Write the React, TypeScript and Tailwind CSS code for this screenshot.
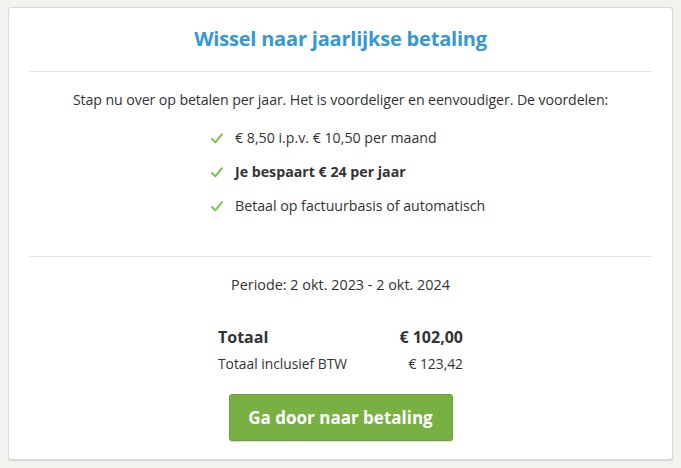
import React from 'react';

const benefits = [
  { text: '€ 8,50 i.p.v. € 10,50 per maand', bold: false },
  { text: 'Je bespaart € 24 per jaar', bold: true },
  { text: 'Betaal op factuurbasis of automatisch', bold: false },
];

function Check() {
  return (
    <svg width="12" height="11" viewBox="0 0 12 11" fill="none" className="shrink-0">
      <path d="M1 6 L4.3 9.3 L11 1.2" stroke="#7cc04b" strokeWidth="1.9" strokeLinecap="round" strokeLinejoin="round" />
    </svg>
  );
}

export default function App() {
  return (
    <div className="min-h-[468px] w-[681px] bg-[#f3f2ef] pt-[7px] pl-[8px]" style={{ fontFamily: '"Open Sans", Lato, sans-serif' }}>
      <div className="w-[665px] h-[453px] bg-white border border-[#d9d9d9] rounded-[3px] shadow-[0_1px_1px_rgba(0,0,0,0.12)] px-[20px] flex flex-col items-center">
        <h1 className="mt-[18px] text-[20px] font-bold text-[#3597d3] leading-[26px] tracking-[-0.2px]">Wissel naar jaarlijkse betaling</h1>
        <div className="mt-[19px] w-full h-px bg-[#e3e3e3]" />
        <p className="mt-[19px] text-[14.2px] text-[#333] leading-[18px] tracking-[-0.1px]">
          Stap nu over op betalen per jaar. Het is voordeliger en eenvoudiger. De voordelen:
        </p>
        <ul className="mt-[20px] flex flex-col gap-[16px] self-start ml-[182px]">
          {benefits.map((b) => (
            <li key={b.text} className="flex items-center gap-[12px]">
              <Check />
              <span className={`text-[14.2px] leading-[18px] text-[#333] ${b.bold ? 'font-bold' : ''}`}>{b.text}</span>
            </li>
          ))}
        </ul>
        <div className="mt-[41px] w-full h-px bg-[#e3e3e3]" />
        <p className="mt-[19px] text-[14.4px] text-[#333] leading-[18px]">Periode: 2 okt. 2023 - 2 okt. 2024</p>
        <div className="mt-[32px] w-[245px] flex flex-col gap-[7px]">
          <div className="flex justify-between items-baseline text-[16px] font-bold text-[#333] leading-[22px]">
            <span>Totaal</span>
            <span>€ 102,00</span>
          </div>
          <div className="flex justify-between text-[13.8px] text-[#333] leading-[18px]">
            <span>Totaal inclusief BTW</span>
            <span>€ 123,42</span>
          </div>
        </div>
        <button className="mt-[21px] w-[224px] h-[47px] rounded-[3px] bg-[#79b043] border border-[#6ea03c] text-white text-[17px] font-bold shadow-[0_1px_1px_rgba(0,0,0,0.15)]">
          Ga door naar betaling
        </button>
      </div>
    </div>
  );
}
